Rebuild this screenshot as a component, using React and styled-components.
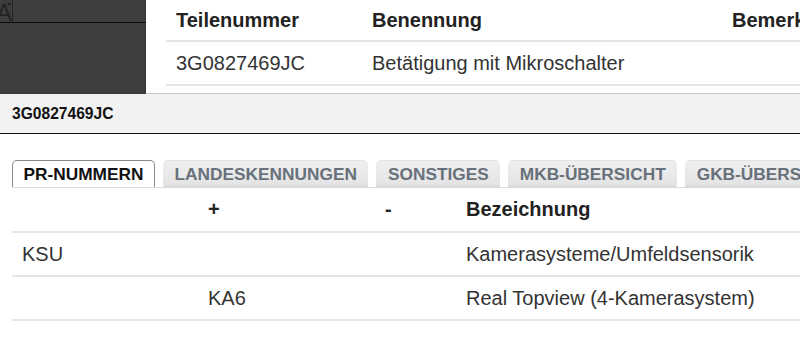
import React from "react";
import styled, { createGlobalStyle } from "styled-components";

const GlobalStyle = createGlobalStyle`
    html, body {
        margin: 0;
        padding: 0;
        background: #fff;
        font-family: "Liberation Sans", Arial, sans-serif;
        overflow: hidden;
    }
`;

const Page = styled.div`
    width: 800px;
    height: 362px;
    overflow: hidden;
`;

const Top = styled.div`
    display: flex;
    height: 94px;
`;

const DarkPanel = styled.div`
    width: 146px;
    flex-shrink: 0;
    background: #3e3e3e;
    box-shadow: inset -1px 0 0 #333;
`;

const PanelBar = styled.div`
    height: 22px;
    border-bottom: 1px solid #0d0d0d;
    display: flex;
`;

const FontButton = styled.div`
    width: 12px;
    height: 22px;
    border-right: 1px solid #252525;
    overflow: hidden;
    display: flex;
    justify-content: flex-end;
    align-items: flex-start;
    color: #222;
    font-size: 24px;
    line-height: 25px;
    position: relative;
    span {
        margin-right: 0px;
    }
    &::after {
        content: "";
        position: absolute;
        right: 1px;
        top: 3px;
        border-left: 2px solid transparent;
        border-right: 2px solid transparent;
        border-top: 3px solid #1e1e1e;
    }
`;

const TopRight = styled.div`
    flex: 1;
    padding-left: 20px;
    border-bottom: 1px solid #c8c8c8;
    overflow: hidden;
`;

const Row = styled.div`
    display: grid;
    grid-template-columns: ${(p) => p.$cols};
    height: ${(p) => p.$h || 42}px;
    border-bottom: 2px solid #e4e5e8;
    align-items: center;
    white-space: nowrap;
`;

const Cell = styled.div`
    padding: 0 10px;
    font-size: 20px;
    color: ${(p) => (p.$head ? "#222" : "#333")};
    font-weight: ${(p) => (p.$head ? 700 : 400)};
    transform: scaleY(1.05);
`;

const Strip = styled.div`
    height: 39px;
    background: #f2f2f2;
    border-bottom: 1px solid #111;
    display: flex;
    align-items: center;
    padding-left: 12px;
    font-size: 15.6px;
    font-weight: 700;
    color: #111;
`;

const TabList = styled.div`
    margin: 26px 0 0 12px;
    display: flex;
    gap: 8px;
    border-bottom: 1px solid #dcdcdc;
    white-space: nowrap;
`;

const Tab = styled.div`
    height: 26px;
    padding: 0 10.5px;
    display: flex;
    align-items: center;
    font-size: 17.3px;
    font-weight: 700;
    border-radius: 5px 5px 0 0;
    flex-shrink: 0;
    ${(p) =>
        p.$active
            ? `
        background: #fff;
        color: #111;
        border: 1px solid #8a8a8a;
        border-bottom: none;
    `
            : `
        background: linear-gradient(#efefef, #e3e3e3);
        color: #68717b;
        border: 1px solid transparent;
        border-bottom: none;
        box-shadow: inset 0 -2px 2px rgba(0,0,0,0.04);
    `}
`;

const Table = styled.div`
    margin-left: 12px;
`;

const topCols = "196px 360px 1fr";
const prCols = "186px 177px 81px 1fr";

const tabs = ["PR-NUMMERN", "LANDESKENNUNGEN", "SONSTIGES", "MKB-ÜBERSICHT", "GKB-ÜBERSICHT"];

const prRows = [
    ["KSU", "", "", "Kamerasysteme/Umfeldsensorik"],
    ["", "KA6", "", "Real Topview (4-Kamerasystem)"],
];

const App = () => {
    return (
        <Page>
            <GlobalStyle />
            <Top>
                <DarkPanel>
                    <PanelBar>
                        <FontButton>
                            <span>A</span>
                        </FontButton>
                    </PanelBar>
                </DarkPanel>
                <TopRight>
                    <Row $cols={topCols} $h={40}>
                        <Cell $head>Teilenummer</Cell>
                        <Cell $head>Benennung</Cell>
                        <Cell $head>Bemerkung</Cell>
                    </Row>
                    <Row $cols={topCols}>
                        <Cell>3G0827469JC</Cell>
                        <Cell>Betätigung mit Mikroschalter</Cell>
                        <Cell></Cell>
                    </Row>
                </TopRight>
            </Top>
            <Strip>3G0827469JC</Strip>
            <TabList>
                {tabs.map((t, i) => (
                    <Tab key={t} $active={i === 0}>
                        {t}
                    </Tab>
                ))}
            </TabList>
            <Table>
                <Row $cols={prCols} $h={43}>
                    <Cell $head></Cell>
                    <Cell $head>+</Cell>
                    <Cell $head>-</Cell>
                    <Cell $head>Bezeichnung</Cell>
                </Row>
                {prRows.map((r, i) => (
                    <Row key={i} $cols={prCols}>
                        {r.map((c, j) => (
                            <Cell key={j}>{c}</Cell>
                        ))}
                    </Row>
                ))}
            </Table>
        </Page>
    );
};

export default App;
